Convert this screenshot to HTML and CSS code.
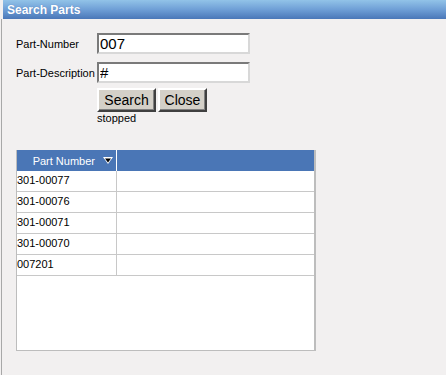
FILE: index.html
```html
<!DOCTYPE html>
<html lang="en">
<head>
  <meta charset="UTF-8" />
  <title>Search Parts</title>
  <link rel="stylesheet" href="styles.css">
</head>
<body>
  <!-- ======= TITLE BAR ======= -->
  <div class="titlebar">Search Parts</div>

  <!-- ======= CONTENT ======= -->
  <div class="content">
    <div class="form">
      <label class="lbl" for="partNumber">Part-Number</label>
      <input type="text" id="partNumber" class="field" value="007" />

      <label class="lbl" for="partDesc">Part-Description</label>
      <input type="text" id="partDesc" class="field" value="#" />

      <span></span>
      <div class="actions">
        <div class="buttons">
          <button class="btn btn-search">Search</button>
          <button class="btn btn-close">Close</button>
        </div>
        <div class="status">stopped</div>
      </div>
    </div>

    <div class="grid">
      <div class="grid-head">
        <div class="col1">Part Number
          <svg class="sort" width="10" height="8" viewBox="0 0 10 8">
            <polygon points="0,0 10,0 5,7" fill="#fff" />
            <polygon points="2,1.5 8,1.5 5,5.5" fill="#000" />
          </svg>
        </div>
        <div class="col2"></div>
      </div>
      <div class="row"><div class="col1">301-00077</div><div class="col2"></div></div>
      <div class="row"><div class="col1">301-00076</div><div class="col2"></div></div>
      <div class="row"><div class="col1">301-00071</div><div class="col2"></div></div>
      <div class="row"><div class="col1">301-00070</div><div class="col2"></div></div>
      <div class="row"><div class="col1">007201</div><div class="col2"></div></div>
    </div>
  </div>
</body>
</html>
```

FILE: styles.css
```css
/* ======= GLOBAL ======= */
*,*::before,*::after{box-sizing:border-box;margin:0;padding:0}

body {
  font-family: Arial, "Liberation Sans", sans-serif;
  background: #f2f0f0;
  color: #000;
  height: 375px;
  overflow: hidden;
  display: flex;
  flex-direction: column;
}

/* ======= TITLE BAR ======= */
.titlebar{margin-left:3px;height:19px;padding:3px 0 0 4px;background:linear-gradient(#92c3e8,#6f9fd6 50%,#4a77b8);color:#fff;font-weight:700;font-size:12px;text-shadow:0 0 1px #4a77b8}

/* ======= CONTENT ======= */
.content{flex:1;margin-left:1px;border-left:1px solid #a8a8a8;padding:14px 0 0 14px}

.form{display:grid;grid-template-columns:81px 153px;row-gap:8px;align-items:center}
.lbl{font-size:11px}
.field{height:21px;width:153px;background:#fff;border:2px solid;border-color:#7a7a7a #d8d8d8 #d8d8d8 #7a7a7a;font-family:inherit;font-size:15px;padding:0 1px;outline:none}
.actions{margin-top:-3px}
.buttons{display:flex;gap:2px}
.btn{height:24px;background:#d4d0c8;border:2px solid;border-color:#fff #404040 #404040 #fff;box-shadow:inset -1px -1px 0 #808080;font-family:inherit;font-size:14px;color:#000}
.btn-search{width:59px}
.btn-close{width:49px}
.status{font-size:11px;margin-top:0}

/* ======= GRID ======= */
.grid{margin-top:26px;width:300px;height:201px;background:#fff;border:1px solid #bdbdbd;border-right-width:2px;border-top:0}
.grid-head{display:flex;height:21px;background:#4a76b6;color:#fff;font-size:11px}
.grid-head .col1{width:100px;border-right:1px solid #fff;display:flex;align-items:center;justify-content:flex-end;padding:0 3px 0 0;gap:8px}
.sort{display:block}
.row{display:flex;height:21px;border-bottom:1px solid #c8c8c8;font-size:11px}
.col1{width:100px;border-right:1px solid #c8c8c8;padding:3px 0 0 0}
.col2{flex:1}
```
